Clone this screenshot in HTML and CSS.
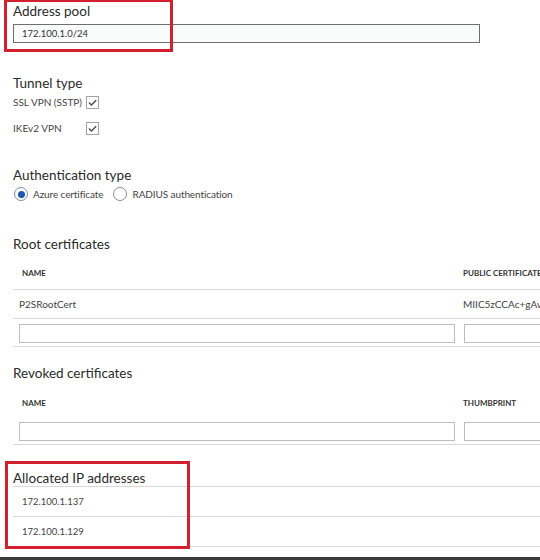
FILE: index.html
```html
<!DOCTYPE html>
<html>
<head>
<meta charset="utf-8">
<link rel="stylesheet" href="styles.css">
</head>
<body>
<div class="page">
  <section class="pool">
    <div class="heading">Address pool</div>
    <div class="textbox dark">172.100.1.0/24</div>
  </section>

  <section class="tunnel">
    <div class="heading">Tunnel type</div>
    <div class="check-row">
      <span class="label">SSL VPN (SSTP)</span>
      <span class="checkbox"><svg width="13" height="13" viewBox="0 0 13 13"><path d="M3 6.6 L5.4 9 L10.2 4.2" fill="none" stroke="#4a4a4a" stroke-width="1.4"/></svg></span>
    </div>
    <div class="check-row">
      <span class="label">IKEv2 VPN</span>
      <span class="checkbox"><svg width="13" height="13" viewBox="0 0 13 13"><path d="M3 6.6 L5.4 9 L10.2 4.2" fill="none" stroke="#4a4a4a" stroke-width="1.4"/></svg></span>
    </div>
  </section>

  <section class="auth">
    <div class="heading">Authentication type</div>
    <div class="radio-row">
      <span class="radio selected"><span class="dot"></span></span>
      <span class="label">Azure certificate</span>
      <span class="radio second"></span>
      <span class="label">RADIUS authentication</span>
    </div>
  </section>

  <section class="root">
    <div class="heading">Root certificates</div>
    <div class="table">
      <div class="row head-row">
        <div class="cell c1 th">NAME</div>
        <div class="cell c2 th">PUBLIC CERTIFICATE DATA</div>
      </div>
      <div class="row data-row lined">
        <div class="cell c1 td">P2SRootCert</div>
        <div class="cell c2 td">MIIC5zCCAc+gAwIBAgIQ</div>
      </div>
      <div class="row input-row lined">
        <div class="cell c1"><div class="textbox light"></div></div>
        <div class="cell c2"><div class="textbox light"></div></div>
      </div>
    </div>
  </section>

  <section class="revoked">
    <div class="heading">Revoked certificates</div>
    <div class="table">
      <div class="row head-row rev-head">
        <div class="cell c1 th">NAME</div>
        <div class="cell c2 th">THUMBPRINT</div>
      </div>
      <div class="row input-row lined">
        <div class="cell c1"><div class="textbox light"></div></div>
        <div class="cell c2"><div class="textbox light"></div></div>
      </div>
    </div>
  </section>

  <section class="allocated">
    <div class="heading">Allocated IP addresses</div>
    <div class="table">
      <div class="row ip-row lined top-lined"><div class="cell td ip">172.100.1.137</div></div>
      <div class="row ip-row lined"><div class="cell td ip">172.100.1.129</div></div>
    </div>
  </section>

  <div class="footer-bar"></div>

  <div class="annot annot-top"></div>
  <div class="annot annot-bottom"></div>
</div>
</body>
</html>
```

FILE: styles.css
```css
html, body {
  margin: 0;
  padding: 0;
  background: #ffffff;
  overflow: hidden;
}

.page {
  position: relative;
  width: 620px;
  height: 560px;
  padding-left: 13px;
  box-sizing: border-box;
  font-family: "Lato", "Liberation Sans", sans-serif;
  color: #2e2e2e;
  display: flex;
  flex-direction: column;
}

.heading {
  font-size: 13.5px;
  line-height: 16px;
  color: #2b2b2b;
}

.label, .td {
  font-size: 10px;
  color: #444444;
}

.textbox {
  box-sizing: border-box;
  height: 19px;
  font-size: 9.5px;
  line-height: 17px;
  padding-left: 8px;
  color: #333;
}

.textbox.dark {
  width: 467px;
  border: 1px solid #6f6f6f;
  background: #fafcfc;
}

.textbox.light {
  width: 100%;
  border: 1px solid #bdbdbd;
  background: #ffffff;
}

/* Address pool */
.pool {
  padding-top: 3px;
}
.pool .textbox {
  margin-top: 5px;
}

/* Tunnel type */
.tunnel {
  margin-top: 32px;
}
.check-row {
  display: flex;
  align-items: center;
  height: 26px;
}
.tunnel .heading {
  margin-bottom: -2px;
}
.check-row .label {
  width: 73px;
}
.checkbox {
  width: 13px;
  height: 13px;
  box-sizing: border-box;
  border: 1px solid #a3a3a3;
  background: #fff;
  display: flex;
  align-items: center;
  justify-content: center;
}
.checkbox svg {
  display: block;
  flex: none;
}

/* Authentication type */
.auth {
  margin-top: 26px;
}
.radio-row {
  display: flex;
  align-items: center;
  height: 22px;
  margin-left: 1px;
}
.radio-row .label {
  letter-spacing: -0.1px;
}
.radio {
  width: 14px;
  height: 14px;
  box-sizing: border-box;
  border: 1px solid #8c8c8c;
  border-radius: 50%;
  display: flex;
  align-items: center;
  justify-content: center;
  margin-right: 5px;
  background: #fff;
}
.radio.selected {
  border-color: #7d8fa8;
}
.radio .dot {
  width: 7px;
  height: 7px;
  border-radius: 50%;
  background: #1e57b0;
}
.radio.second {
  margin-left: 10px;
}

/* Tables */
.root {
  margin-top: 31px;
}
.table {
  display: flex;
  flex-direction: column;
}
.row {
  display: flex;
  align-items: center;
}
.lined {
  border-bottom: 1px solid #d9d9d9;
}
.top-lined {
  border-top: 1px solid #d9d9d9;
}
.cell.c1 {
  width: 450px;
  flex: none;
  box-sizing: border-box;
}
.cell.c2 {
  flex: 1;
  box-sizing: border-box;
  white-space: nowrap;
}
.head-row {
  height: 32px;
  border-bottom: 1px solid #d9d9d9;
}
.root .head-row {
  margin-top: 5px;
}
.rev-head {
  border-bottom: none;
  height: 29px;
}
.revoked .head-row {
  margin-top: 7px;
}
.th {
  font-size: 8px;
  font-weight: bold;
  color: #333;
}
.c1.th {
  padding-left: 9px;
}
.data-row {
  height: 28px;
}
.c1.td {
  padding-left: 6px;
}
.input-row {
  height: 28px;
  align-items: flex-start;
  padding-top: 5px;
  box-sizing: border-box;
}
.input-row .c1 {
  padding-left: 6px;
  padding-right: 8px;
}
.input-row .c2 {
  padding-left: 1px;
}

.revoked {
  margin-top: 18px;
}

/* Allocated */
.allocated {
  margin-top: 25px;
}
.ip-row {
  height: 29px;
}
.ip {
  padding-left: 9px;
  font-size: 9.5px;
}

.footer-bar {
  position: absolute;
  left: 0;
  right: 0;
  top: 557px;
  height: 3px;
  background: #3a3a3a;
}

/* red annotation boxes */
.annot {
  position: absolute;
  border: 3px solid #d2202f;
  box-sizing: border-box;
}
.annot-top {
  left: 4px;
  top: -1px;
  width: 169px;
  height: 53px;
}
.annot-bottom {
  left: 5px;
  top: 461px;
  width: 185px;
  height: 88px;
}
```
